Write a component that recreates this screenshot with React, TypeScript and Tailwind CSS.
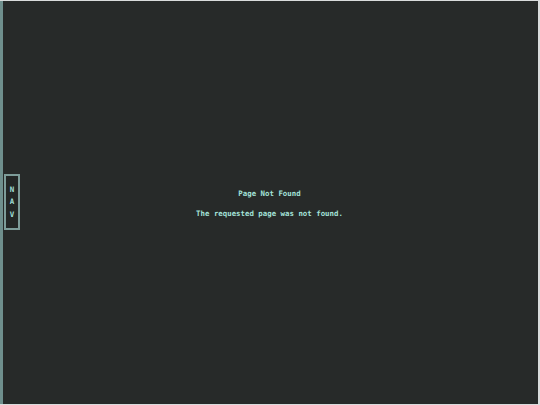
import React from 'react';

const mono = { fontFamily: '"DejaVu Sans Mono", "Liberation Mono", monospace' };

const App: React.FC = () => {
  return (
    <div className="w-[540px] h-[405px] bg-[#d9dcdc] pt-px pr-[2px] pb-px">
      <div className="relative h-full bg-[#272a29] border-l-[3px] border-[#6f8f8d] flex items-center justify-center" style={mono}>
        <button className="absolute left-[1px] top-[173px] w-[16px] h-[56px] border-2 border-[#7d9c99] bg-[#232625] flex flex-col items-center justify-center gap-[5px] text-[#9fdcd4] text-[7.5px] font-bold leading-none">
          <span>N</span>
          <span>A</span>
          <span>V</span>
        </button>
        <div className="flex flex-col items-center gap-[12px] text-[#a4e2d9] text-[7.4px] font-bold leading-none mt-[2px] ml-[-2px]">
          <p>Page Not Found</p>
          <p>The requested page was not found.</p>
        </div>
      </div>
    </div>
  );
};

export default App;
